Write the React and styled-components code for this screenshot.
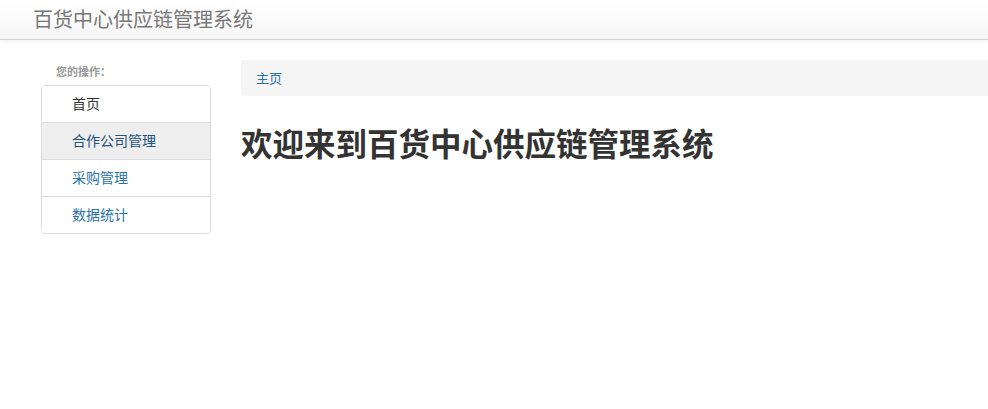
import styled, { createGlobalStyle } from 'styled-components';

const GlobalStyle = createGlobalStyle`
  html, body {
    margin: 0;
    padding: 0;
    background: #fff;
  }
  body {
    font-family: "Liberation Sans", "Noto Sans CJK SC", sans-serif;
    font-size: 14px;
    color: #333;
    overflow-x: hidden;
  }
  * {
    box-sizing: border-box;
  }
`;

const menu = [
  { label: '首页', kind: 'home' },
  { label: '合作公司管理', kind: 'active' },
  { label: '采购管理', kind: 'link' },
  { label: '数据统计', kind: 'link' },
];

const App = () => (
  <>
    <GlobalStyle />
    <Navbar>
      <Brand>百货中心供应链管理系统</Brand>
    </Navbar>
    <Layout>
      <Sidebar>
        <SideTitle>您的操作：</SideTitle>
        <ListGroup>
          {menu.map((item) => (
            <ListItem key={item.label} $kind={item.kind}>
              {item.label}
            </ListItem>
          ))}
        </ListGroup>
      </Sidebar>
      <Main>
        <Breadcrumb>
          <Crumb>主页</Crumb>
        </Breadcrumb>
        <Title>欢迎来到百货中心供应链管理系统</Title>
      </Main>
    </Layout>
  </>
);

const Navbar = styled.div`
  height: 40px;
  display: flex;
  align-items: center;
  padding-left: 33px;
  background: linear-gradient(to bottom, #fff 0%, #f6f6f6 100%);
  border-bottom: 1px solid #d4d4d4;
  box-shadow: 0 1px 5px rgba(0, 0, 0, 0.075);
`;

const Brand = styled.span`
  font-size: 20px;
  line-height: 24px;
  color: #777;
`;

const Layout = styled.div`
  display: flex;
  align-items: flex-start;
  padding: 20px 0 0 41px;
  gap: 30px;
`;

const Sidebar = styled.div`
  width: 170px;
  flex-shrink: 0;
`;

const SideTitle = styled.div`
  height: 25px;
  line-height: 25px;
  padding-left: 15px;
  font-size: 11px;
  font-weight: bold;
  color: #999;
`;

const ListGroup = styled.div`
  border: 1px solid #ddd;
  border-radius: 4px;
  overflow: hidden;
`;

const ListItem = styled.div`
  box-sizing: content-box;
  height: 20px;
  line-height: 20px;
  padding: 8px 30px;
  font-size: 14px;
  cursor: pointer;
  background: ${({ $kind }) => ($kind === 'active' ? '#eee' : '#fff')};
  color: ${({ $kind }) =>
    $kind === 'home' ? '#333' : $kind === 'active' ? '#23527c' : '#2a73a8'};

  & + & {
    border-top: 1px solid #ddd;
  }
`;

const Main = styled.div`
  flex: 1;
  min-width: 0;
`;

const Breadcrumb = styled.div`
  height: 36px;
  line-height: 36px;
  padding: 0 15px;
  background: #f5f5f5;
  border-radius: 4px 0 0 4px;
`;

const Crumb = styled.span`
  font-size: 13px;
  color: #2a73a8;
`;

const Title = styled.h1`
  margin: 32px 0 0;
  font-size: 31.5px;
  line-height: 35px;
  font-weight: bold;
  color: #333;
`;

export default App;
